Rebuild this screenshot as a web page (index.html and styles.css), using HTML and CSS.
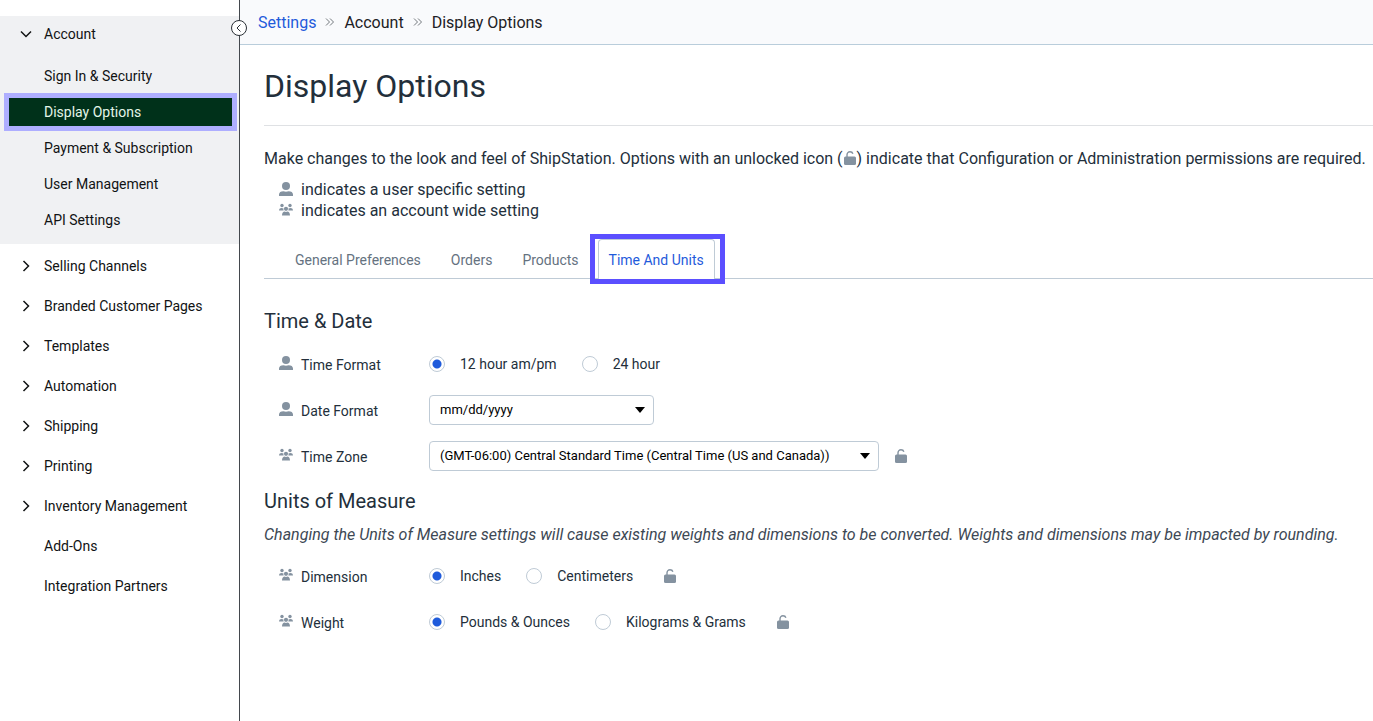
FILE: index.html
```html
<!DOCTYPE html>
<html lang="en">
<head>
  <meta charset="UTF-8" />
  <meta name="viewport" content="width=device-width, initial-scale=1.0" />
  <title>Display Options - Settings</title>
  <link rel="stylesheet" href="styles.css">
</head>
<body>
  <!-- Shared icons -->
  <svg class="sprite" aria-hidden="true">
    <symbol id="icon-user" viewBox="0 0 14 14">
      <circle cx="7" cy="4" r="4" />
      <path d="M0 14v-1.500C0 10.400 1.800 9.200 4.400 9.200 5.900 9.800 8.100 9.800 9.600 9.200 12.200 9.200 14 10.400 14 12.500V14z" />
    </symbol>
    <symbol id="icon-users" viewBox="0 0 14 14">
      <circle cx="3" cy="2.500" r="1.700" />
      <circle cx="11" cy="2.500" r="1.700" />
      <circle cx="7" cy="5.800" r="2.100" />
      <path d="M0 7.600C0 5.800 1.200 5 2.600 5c.8 0 1.400.2 1.900.6-.2.8-.1 1.400.2 2zM14 7.600C14 5.800 12.800 5 11.400 5c-.8 0-1.400.2-1.900.6.2.8.1 1.400-.2 2zM3 12.500c0-2.600 1.300-4 2.600-4 .8.500 2 .5 2.800 0 1.300 0 2.600 1.400 2.600 4z" />
    </symbol>
    <symbol id="icon-unlock" viewBox="0 0 14 14">
      <path d="M4 7V3.800C4 2 5.200.8 7 .8c1.500 0 2.500.7 2.900 2" fill="none" stroke="currentColor" stroke-width="1.400" />
      <rect x="1" y="5.500" width="12" height="8.500" rx="1.500" />
    </symbol>
    <symbol id="icon-chevron" viewBox="0 0 12 12">
      <path d="M3.500 1l5 5-5 5" fill="none" stroke="currentColor" stroke-width="1.500" />
    </symbol>
    <symbol id="icon-double" viewBox="0 0 10 10">
      <path d="M1 1.500L4.500 5 1 8.500M5 1.500L8.500 5 5 8.500" fill="none" stroke="currentColor" />
    </symbol>
  </svg>

  <div class="layout">
    <aside class="sidebar">
      <button class="collapse" type="button" aria-label="Collapse menu">
        <svg viewBox="0 0 16 16"><circle cx="8" cy="8" r="7.500" fill="#fff" /><path d="M9.500 4.500L6 8l3.500 3.500" /></svg>
      </button>
      <nav>
        <div class="group">
          <a class="group-title" href="#"><svg class="chevron open"><use href="#icon-chevron" /></svg>Account</a>
          <a class="sub-item" href="#">Sign In &amp; Security</a>
          <a class="sub-item active" href="#">Display Options</a>
          <a class="sub-item" href="#">Payment &amp; Subscription</a>
          <a class="sub-item" href="#">User Management</a>
          <a class="sub-item" href="#">API Settings</a>
        </div>
        <a class="nav-item" href="#"><svg class="chevron"><use href="#icon-chevron" /></svg>Selling Channels</a>
        <a class="nav-item" href="#"><svg class="chevron"><use href="#icon-chevron" /></svg>Branded Customer Pages</a>
        <a class="nav-item" href="#"><svg class="chevron"><use href="#icon-chevron" /></svg>Templates</a>
        <a class="nav-item" href="#"><svg class="chevron"><use href="#icon-chevron" /></svg>Automation</a>
        <a class="nav-item" href="#"><svg class="chevron"><use href="#icon-chevron" /></svg>Shipping</a>
        <a class="nav-item" href="#"><svg class="chevron"><use href="#icon-chevron" /></svg>Printing</a>
        <a class="nav-item" href="#"><svg class="chevron"><use href="#icon-chevron" /></svg>Inventory Management</a>
        <a class="nav-item plain" href="#">Add-Ons</a>
        <a class="nav-item plain" href="#">Integration Partners</a>
      </nav>
    </aside>

    <div class="main">
      <header class="breadcrumbs">
        <a href="#">Settings</a>
        <svg class="sep"><use href="#icon-double" /></svg>
        <span>Account</span>
        <svg class="sep"><use href="#icon-double" /></svg>
        <span>Display Options</span>
      </header>

      <main class="content">
        <h1>Display Options</h1>

        <p class="intro">Make changes to the look and feel of ShipStation. Options with an unlocked icon (<svg class="icon inline"><use href="#icon-unlock" /></svg>) indicate that Configuration or Administration permissions are required.</p>
        <ul class="legend">
          <li><svg class="icon"><use href="#icon-user" /></svg>indicates a user specific setting</li>
          <li><svg class="icon"><use href="#icon-users" /></svg>indicates an account wide setting</li>
        </ul>

        <nav class="tabs">
          <a class="tab" href="#">General Preferences</a>
          <a class="tab" href="#">Orders</a>
          <a class="tab" href="#">Products</a>
          <a class="tab active" href="#">Time And Units</a>
        </nav>

        <form>
          <h2>Time &amp; Date</h2>
          <div class="row" role="radiogroup" aria-labelledby="timeFormatLabel">
            <svg class="icon"><use href="#icon-user" /></svg>
            <span class="row-label" id="timeFormatLabel">Time Format</span>
            <div class="options">
              <label><input type="radio" name="timeFormat" checked>12 hour am/pm</label>
              <label><input type="radio" name="timeFormat">24 hour</label>
            </div>
          </div>
          <div class="row">
            <svg class="icon"><use href="#icon-user" /></svg>
            <label class="row-label" for="dateFormat">Date Format</label>
            <select id="dateFormat" class="select-small">
              <option>mm/dd/yyyy</option>
            </select>
          </div>
          <div class="row">
            <svg class="icon"><use href="#icon-users" /></svg>
            <label class="row-label" for="timeZone">Time Zone</label>
            <select id="timeZone" class="select-large">
              <option>(GMT-06:00) Central Standard Time (Central Time (US and Canada))</option>
            </select>
            <svg class="icon lock"><use href="#icon-unlock" /></svg>
          </div>

          <h2>Units of Measure</h2>
          <p class="note">Changing the Units of Measure settings will cause existing weights and dimensions to be converted. Weights and dimensions may be impacted by rounding.</p>
          <div class="row" role="radiogroup" aria-labelledby="dimensionLabel">
            <svg class="icon"><use href="#icon-users" /></svg>
            <span class="row-label" id="dimensionLabel">Dimension</span>
            <div class="options">
              <label><input type="radio" name="dimension" checked>Inches</label>
              <label><input type="radio" name="dimension">Centimeters</label>
              <svg class="icon"><use href="#icon-unlock" /></svg>
            </div>
          </div>
          <div class="row" role="radiogroup" aria-labelledby="weightLabel">
            <svg class="icon"><use href="#icon-users" /></svg>
            <span class="row-label" id="weightLabel">Weight</span>
            <div class="options">
              <label><input type="radio" name="weight" checked>Pounds &amp; Ounces</label>
              <label><input type="radio" name="weight">Kilograms &amp; Grams</label>
              <svg class="icon"><use href="#icon-unlock" /></svg>
            </div>
          </div>
        </form>
      </main>
    </div>
  </div>
</body>
</html>
```
FILE: styles.css
```css
/* Base Styles */
* {
  box-sizing: border-box;
}

body {
  margin: 0;
  font-family: Roboto, sans-serif;
  font-size: 14px;
  color: #232f3b;
  background-color: #fff;
}

a {
  color: inherit;
  text-decoration: none;
}

.sprite {
  display: none;
}

.layout {
  display: flex;
  min-height: 100vh;
}

/* Sidebar */
.sidebar {
  position: relative;
  flex: 0 0 240px;
  padding-top: 16px;
  border-right: 1px solid #43484d;
  color: #111314;
}

.collapse {
  position: absolute;
  top: 20px;
  right: -8px;
  width: 16px;
  height: 16px;
  padding: 0;
  border: none;
  background: none;
  cursor: pointer;
}

.collapse svg {
  display: block;
  width: 16px;
  height: 16px;
  fill: none;
  stroke: #2a3036;
  overflow: visible;
}

.group {
  background-color: #f0f1f3;
  padding-bottom: 6px;
  margin-bottom: 2px;
}

.group-title,
.nav-item {
  display: flex;
  align-items: center;
  gap: 12px;
  padding-left: 20px;
}

.group-title {
  height: 36px;
  margin-bottom: 6px;
}

.nav-item {
  height: 40px;
}

.nav-item.plain {
  padding-left: 44px;
}

.chevron {
  width: 12px;
  height: 12px;
}

.chevron.open {
  transform: rotate(90deg);
}

.sub-item {
  display: block;
  padding-left: 44px;
  line-height: 36px;
}

.sub-item.active {
  margin: 4px 7px 4px 9px;
  padding-left: 35px;
  line-height: 28px;
  color: #e3f5e8;
  background-color: #00311a;
  outline: 5px solid #aeaeff;
}

/* Breadcrumbs */
.main {
  flex: 1;
  min-width: 0;
}

.breadcrumbs {
  display: flex;
  align-items: center;
  gap: 9px;
  height: 45px;
  padding-left: 18px;
  background-color: #f9fafc;
  border-bottom: 1px solid #b9cddb;
  font-size: 16px;
  color: #1d2125;
}

.breadcrumbs a {
  color: #1f5bdb;
}

.breadcrumbs .sep {
  width: 10px;
  height: 10px;
  color: #73787d;
}

/* Content */
.content {
  padding-left: 24px;
}

h1 {
  margin: 0;
  padding: 21px 0 19px;
  border-bottom: 1px solid #dfe1e4;
  font-size: 32px;
  font-weight: 400;
  line-height: 40px;
}

h2 {
  margin: 0;
  font-size: 20px;
  font-weight: 400;
  line-height: 42px;
}

.icon {
  flex: none;
  width: 14px;
  height: 14px;
  color: #8492a0;
  fill: currentColor;
}

.icon.inline {
  vertical-align: -1px;
}

.intro {
  margin: 22px 0 10px;
  font-size: 16px;
  line-height: 21px;
}

.legend {
  margin: 0;
  padding: 0 0 0 15px;
  list-style: none;
  font-size: 16px;
  line-height: 21px;
}

.legend li {
  display: flex;
  align-items: center;
  gap: 8px;
}

.legend .icon {
  margin-bottom: 2px;
}

/* Tabs */
.tabs {
  display: flex;
  gap: 8px;
  height: 40px;
  margin: 18px 0 21px;
  padding-left: 20px;
  border-bottom: 1px solid #bfcbd6;
}

.tab {
  position: relative;
  height: 40px;
  padding: 0 10px;
  border: 1px solid transparent;
  border-bottom: none;
  border-radius: 4px 4px 0 0;
  line-height: 40px;
  color: #65727f;
}

.tab.active {
  color: #1f5bdb;
  background-color: #fff;
  border-color: #bfcbd6;
}

/* Highlight frame round the current tab */
.tab.active::after {
  content: "";
  position: absolute;
  inset: -6px -11px -5px -9px;
  border: 5px solid #5b4fff;
}

/* Settings rows */
.row {
  display: flex;
  align-items: center;
  height: 46px;
  padding-left: 15px;
}

.row > .icon {
  margin-bottom: 4px;
}

.row-label {
  width: 128px;
  margin-left: 8px;
}

.options,
.row select {
  margin-bottom: 2px;
}

.options {
  display: flex;
  align-items: center;
}

.options label {
  display: flex;
  align-items: center;
  margin-right: 25px;
}

.options .icon {
  margin-left: 5px;
}

input[type="radio"] {
  appearance: none;
  width: 16px;
  height: 16px;
  margin: 0 15px 0 0;
  border: 1px solid #bfcbd6;
  border-radius: 50%;
  background-color: #fff;
}

input[type="radio"]:checked {
  background-image: radial-gradient(circle, #1f5bdb 4px, transparent 5px);
}

select {
  appearance: none;
  height: 30px;
  padding: 0 30px 2px 10px;
  border: 1px solid #bfcbd6;
  border-radius: 4px;
  background: #fff url("data:image/svg+xml,%3Csvg xmlns='http://www.w3.org/2000/svg' width='10' height='6'%3E%3Cpath d='M0 0h10L5 6z'/%3E%3C/svg%3E") no-repeat right 8px center;
  font-family: inherit;
  font-size: 13px;
  color: #000;
}

.select-small {
  width: 225px;
}

.select-large {
  width: 450px;
}

.row > .lock {
  margin: 0 0 2px 15px;
}

.note {
  margin: 2px 0 9px;
  font-size: 16px;
  font-style: italic;
  line-height: 21px;
  color: #3d4854;
}
```
